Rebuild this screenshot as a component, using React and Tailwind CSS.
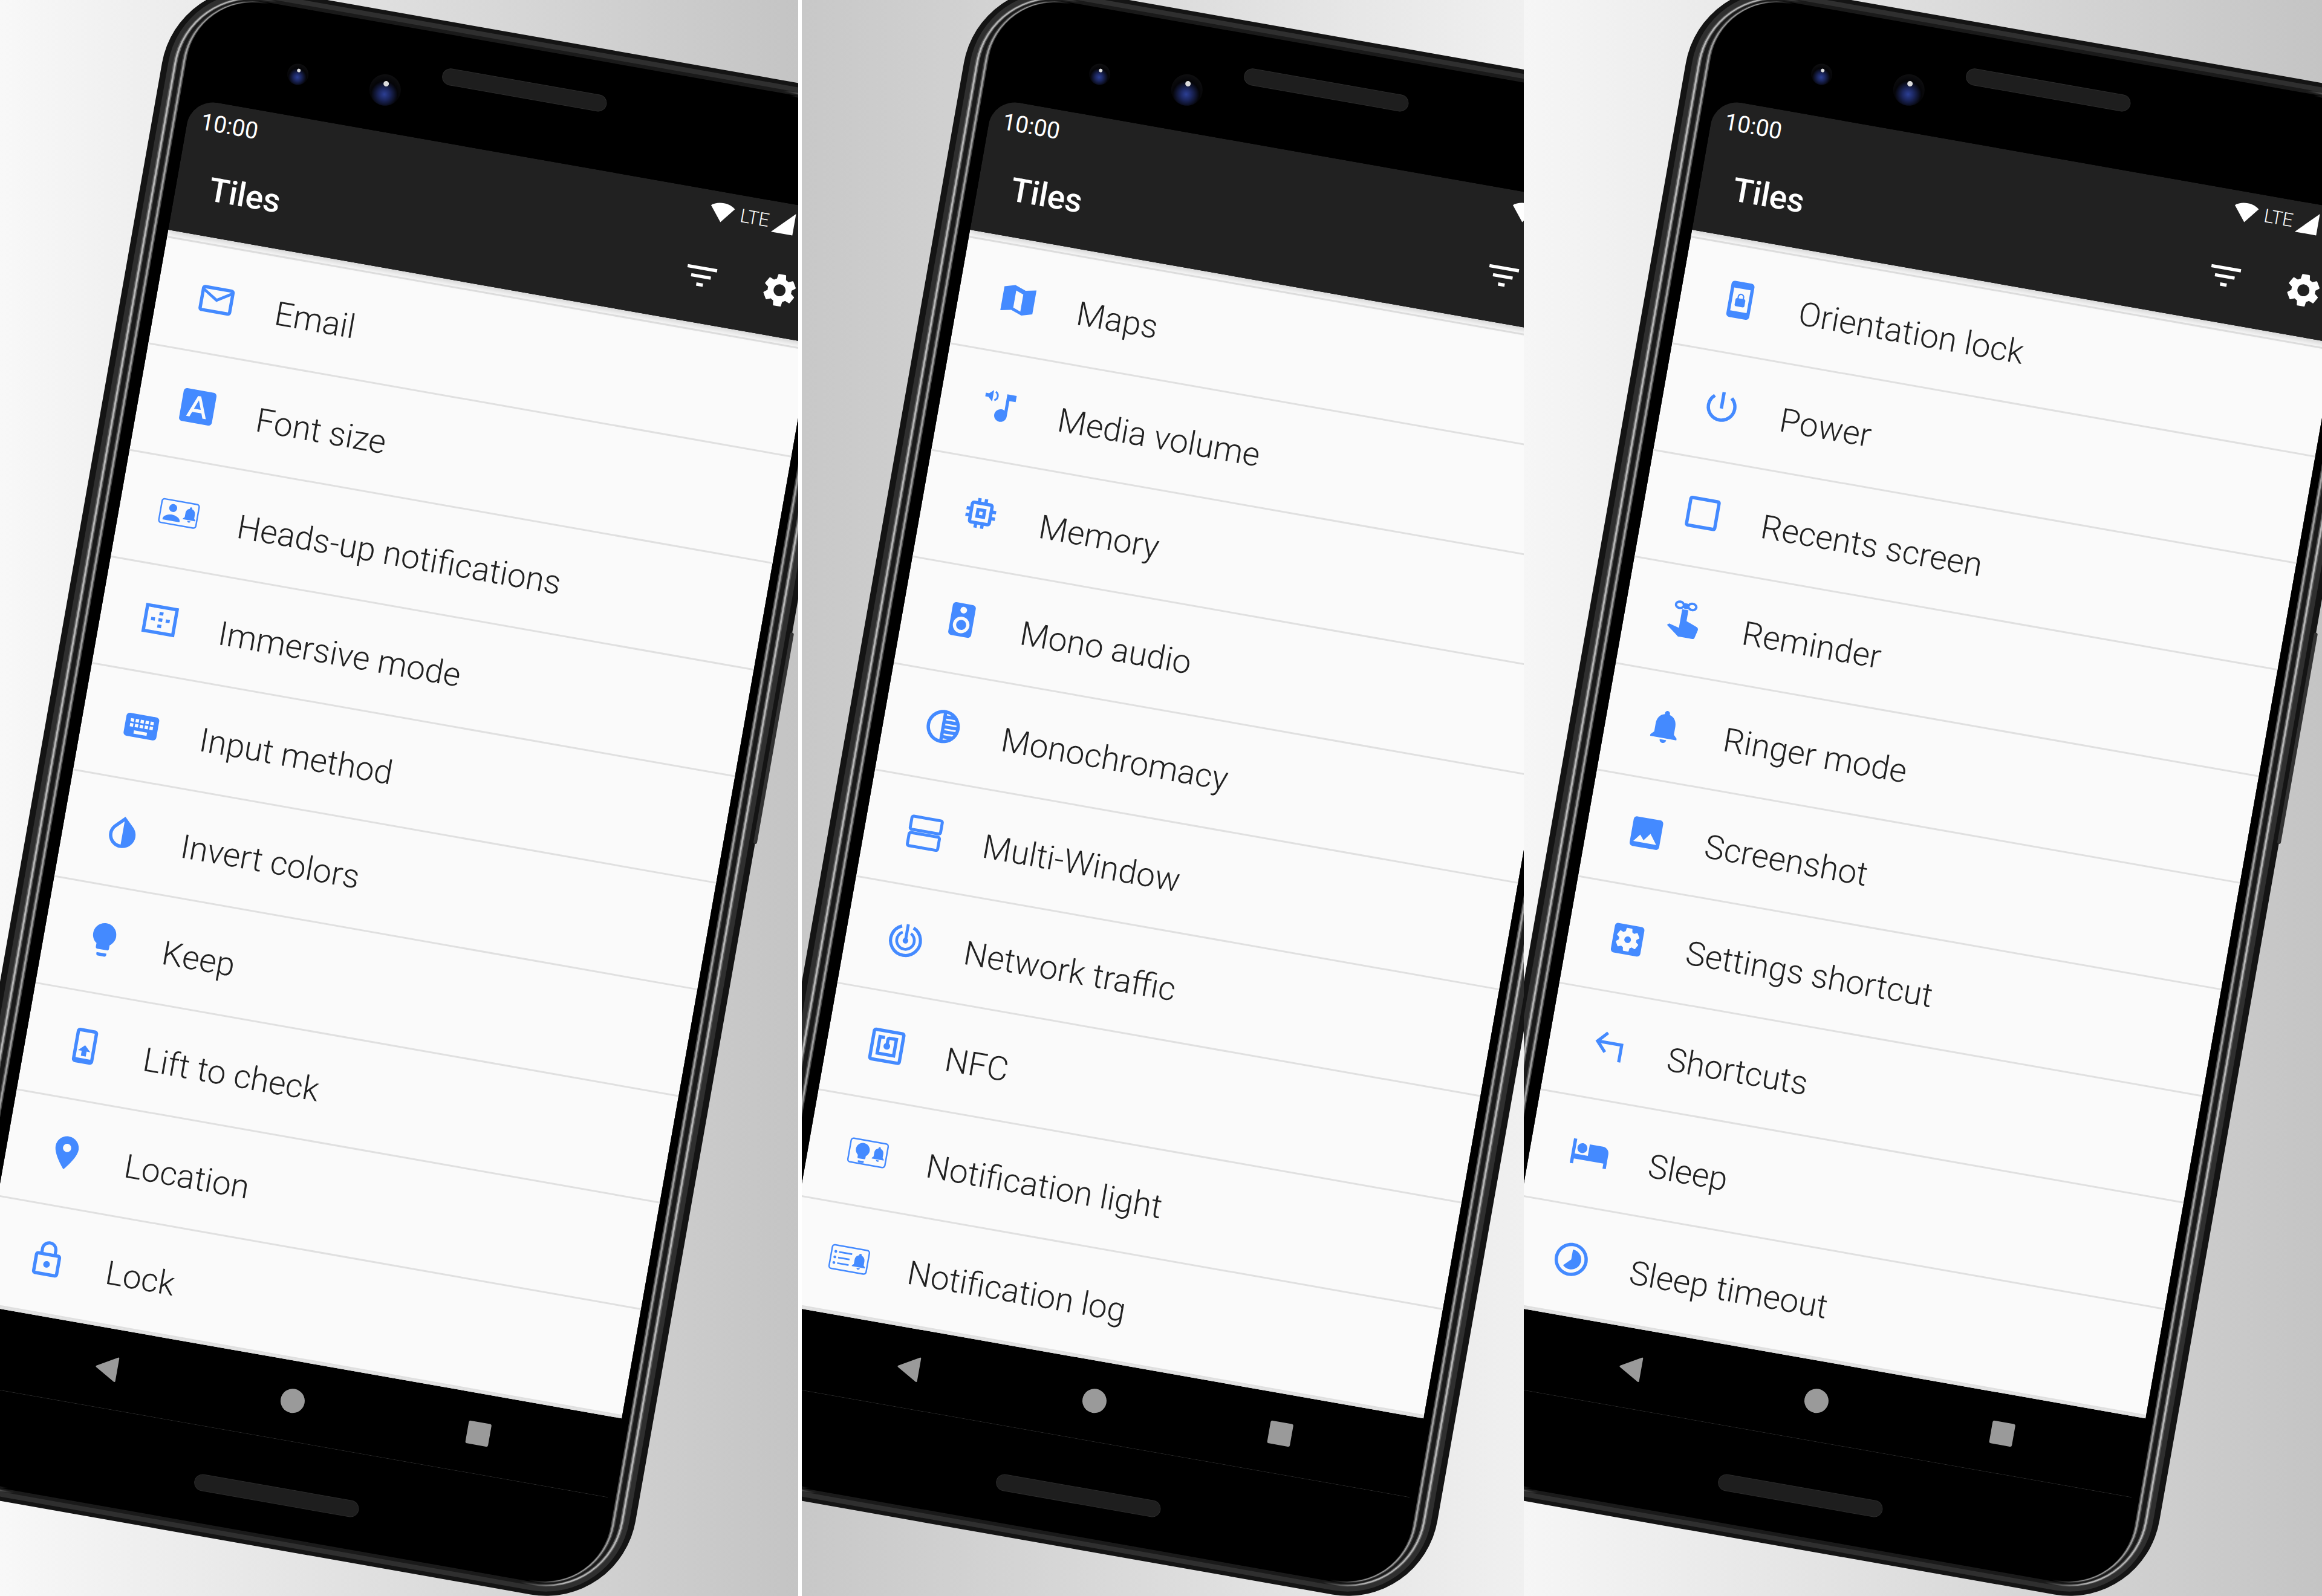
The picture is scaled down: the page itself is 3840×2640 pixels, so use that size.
import {
  MdMailOutline, MdFontDownload, MdKeyboard, MdInvertColors, MdLightbulb, MdLocationOn, MdLockOutline,
  MdMemory, MdSpeaker, MdTonality, MdNfc, MdScreenLockPortrait, MdPowerSettingsNew, MdNotifications,
  MdImage, MdSettingsApplications, MdHotel, MdTimelapse, MdFilterList, MdSettings,
} from "react-icons/md";

const BELL = "M12 22c1.1 0 2-.9 2-2h-4c0 1.1.89 2 2 2zm6-6v-5c0-3.07-1.64-5.64-4.5-6.32V4c0-.83-.67-1.5-1.5-1.5s-1.5.67-1.5 1.5v.68C7.63 5.36 6 7.92 6 11v5l-2 2v1h16v-1l-2-2z";
const BULB = "M9 21c0 .55.45 1 1 1h4c.55 0 1-.45 1-1v-1H9v1zm3-19C8.14 2 5 5.14 5 9c0 2.38 1.19 4.47 3 5.74V17c0 .55.45 1 1 1h6c.55 0 1-.45 1-1v-2.26c1.81-1.27 3-3.36 3-5.74 0-3.86-3.14-7-7-7z";

const Svg = ({ children, className = "size-[66px]" }) => (
  <svg viewBox="0 0 24 24" fill="currentColor" className={className}>{children}</svg>
);

const Card = ({ children }) => (
  <Svg>
    <rect x=".7" y="4.8" width="22.6" height="14.4" rx="1.5" fill="none" stroke="currentColor" strokeWidth=".9" />
    {children}
  </Svg>
);

const HeadsUp = () => (
  <Card>
    <circle cx="8" cy="9.4" r="2.4" />
    <path d="M2.8 16.6c0-2.1 3.5-3.2 5.2-3.2s5.2 1.1 5.2 3.2v.6H2.8z" />
    <path d={BELL} transform="translate(12.9 5.9) scale(.48)" />
  </Card>
);

const NotifLight = () => (
  <Card>
    <path d={BULB} transform="translate(1.4 5.4) scale(.6)" />
    <path d={BELL} transform="translate(12.9 6.2) scale(.46)" />
  </Card>
);

const NotifLog = () => (
  <Card>
    <circle cx="3.2" cy="8.6" r=".85" />
    <circle cx="3.2" cy="12" r=".85" />
    <circle cx="3.2" cy="15.4" r=".85" />
    <path d="M5.2 8.1h8v1h-8zM5.2 11.5h7v1h-7zM5.2 14.9h7v1h-7z" />
    <path d={BELL} transform="translate(12.2 6.2) scale(.5)" />
  </Card>
);

const Immersive = () => (
  <Svg>
    <path fillRule="evenodd" d="M2 3.2h20v17.6H2zM4 5.2v13.6h16V5.2z" />
    <path d="M10.9 7.2h2.4v2h-2.4zM6.4 11h2.4v2H6.4zM10.9 11h2.4v2h-2.4zM15.4 11h2.4v2h-2.4zM10.9 14.8h2.4v2h-2.4z" />
  </Svg>
);

const LiftToCheck = () => (
  <Svg>
    <path fillRule="evenodd" d="M7.5 1.5h9c1 0 2 .9 2 2v17c0 1.1-1 2-2 2h-9c-1 0-2-.9-2-2v-17c0-1.1 1-2 2-2zM7.5 3.6v15.8h9V3.6z" />
    <path d="M12 11.4l-3.8 3.6h2.3v3h3v-3h2.3z" />
  </Svg>
);

const Maps = () => (
  <Svg>
    <path fillRule="evenodd" d="M2.3 5.1L8.7 3.3l6.6 2.3 6.4-1.3v14.6l-6.4 1.8-6.6-2.3-6.4 1.3zM9.7 6.4v10.4l4.6 1.7V8.1z" />
  </Svg>
);

const MediaVolume = () => (
  <Svg>
    <path d="M12 3v10.55c-.59-.34-1.27-.55-2-.55-2.21 0-4 1.79-4 4s1.79 4 4 4 4-1.79 4-4V7h4V3h-6z" transform="translate(3.9 .9) scale(.95)" />
    <path d="M2.4 5h2l2.6-2.4v7L4.4 7.2h-2z" />
    <path d="M8.2 3.4a2.9 2.9 0 0 1 0 5.2" fill="none" stroke="currentColor" strokeWidth="1.1" />
  </Svg>
);

const MultiWindow = () => (
  <Svg>
    <rect x="3" y="3" width="18.5" height="8" rx="1" fill="none" stroke="currentColor" strokeWidth="1.8" />
    <rect x="3" y="13" width="18.5" height="8" rx="1" fill="none" stroke="currentColor" strokeWidth="1.8" />
  </Svg>
);

const NetworkTraffic = () => (
  <Svg>
    <path d="M8.5 4.2a9 9 0 1 0 7 0" fill="none" stroke="currentColor" strokeWidth="1.9" />
    <path d="M9.5 7.8a5.3 5.3 0 1 0 5 0" fill="none" stroke="currentColor" strokeWidth="1.7" />
    <rect x="11.1" y="2.6" width="1.8" height="10" />
    <circle cx="12" cy="12.6" r="1.7" />
  </Svg>
);

const Recents = () => (
  <Svg>
    <rect x="3.4" y="3.6" width="17.2" height="16.8" rx=".8" fill="none" stroke="currentColor" strokeWidth="2" />
  </Svg>
);

const Reminder = () => (
  <Svg>
    <ellipse cx="8" cy="3.4" rx="2.4" ry="1.9" fill="none" stroke="currentColor" strokeWidth="1.4" />
    <ellipse cx="15.6" cy="3.4" rx="2.4" ry="1.9" fill="none" stroke="currentColor" strokeWidth="1.4" />
    <rect x="10.2" y="1.9" width="3.4" height="3.4" rx="1.2" />
    <path d="M9.8 5.8h3.8v6.6l6.6 2.5c.9.4 1.2 1.1 1 1.9l-1.1 4.6c-.2.7-.7 1-1.3 1h-8.2c-.5 0-.9-.2-1.2-.6L2.4 16.6l1.2-1 6.2 1.6z" />
  </Svg>
);

const Shortcuts = () => (
  <Svg>
    <path d="M19.5 20.5V10H4.8M10.2 4.1L4.8 10l5.4 5.9" fill="none" stroke="currentColor" strokeWidth="1.9" />
  </Svg>
);

const COLUMNS = [
  [
    [MdMailOutline, "Email"],
    [MdFontDownload, "Font size"],
    [HeadsUp, "Heads-up notifications"],
    [Immersive, "Immersive mode"],
    [MdKeyboard, "Input method"],
    [MdInvertColors, "Invert colors"],
    [MdLightbulb, "Keep"],
    [LiftToCheck, "Lift to check"],
    [MdLocationOn, "Location"],
    [MdLockOutline, "Lock"],
  ],
  [
    [Maps, "Maps"],
    [MediaVolume, "Media volume"],
    [MdMemory, "Memory"],
    [MdSpeaker, "Mono audio"],
    [MdTonality, "Monochromacy"],
    [MultiWindow, "Multi-Window"],
    [NetworkTraffic, "Network traffic"],
    [MdNfc, "NFC"],
    [NotifLight, "Notification light"],
    [NotifLog, "Notification log"],
  ],
  [
    [MdScreenLockPortrait, "Orientation lock"],
    [MdPowerSettingsNew, "Power"],
    [Recents, "Recents screen"],
    [Reminder, "Reminder"],
    [MdNotifications, "Ringer mode"],
    [MdImage, "Screenshot"],
    [MdSettingsApplications, "Settings shortcut"],
    [Shortcuts, "Shortcuts"],
    [MdHotel, "Sleep"],
    [MdTimelapse, "Sleep timeout"],
  ],
];

const Camera = ({ className, dot }) => (
  <div className={`relative shrink-0 rounded-full bg-[radial-gradient(circle_at_50%_64%,#2c3f94_0%,#1c2760_22%,#050508_52%,#161616_100%)] ${className}`}>
    <div className={`absolute left-1/2 top-[22%] -translate-x-1/2 rounded-full bg-[#dcdcdc] ${dot}`} />
  </div>
);

const Speaker = ({ className = "" }) => (
  <div className={`h-[28px] w-[276px] shrink-0 rounded-full border border-[#2c2c2c] bg-[#1e1e1e] ${className}`} />
);

const Row = ({ Icon, label }) => (
  <div className="flex h-[179px] shrink-0 items-center border-b-[3px] border-[#e0e0e0] pl-[66px]">
    <div className="flex size-[66px] shrink-0 items-center justify-center text-[#448aff]">
      <Icon className="size-[66px]" />
    </div>
    <span className="ml-[66px] mt-[8px] whitespace-nowrap text-[55px] font-light leading-none text-[#212121]">{label}</span>
  </div>
);

const Screen = ({ rows }) => (
  <div className="ml-[19px] flex h-[2160px] w-[1080px] shrink-0 flex-col overflow-hidden rounded-t-[44px] border-b border-[#2e2e2e] bg-black">
    <div className="relative z-10 shrink-0 bg-[#212121] text-white shadow-[0_4px_12px_rgba(0,0,0,0.18)]">
      <div className="flex h-[66px] items-center pl-[22px] pr-[61px]">
        <span className="pt-[4px] text-[38.5px] leading-none">10:00</span>
        <div className="ml-auto flex items-center gap-[7px]">
          <svg viewBox="0 0 44 36" fill="currentColor" className="h-[36px] w-[44px]">
            <path d="M2 10C12 1 32 1 42 10L22 35z" />
          </svg>
          <span className="-mr-[2px] ml-[2px] text-[31px] font-light leading-none">LTE</span>
          <svg viewBox="0 0 38 38" fill="currentColor" className="size-[38px]">
            <path d="M37 1v36H1z" />
          </svg>
        </div>
      </div>
      <div className="flex h-[155px] items-center pl-[55px] pr-[34px]">
        <span className="flex-1 text-[55px] font-medium leading-none">Tiles</span>
        <MdFilterList className="size-[66px]" />
        <MdSettings className="ml-[66px] size-[66px]" />
      </div>
    </div>
    <div className="flex h-[1806px] shrink-0 flex-col bg-[#fafafa] pt-[10px]">
      <div className="h-[3px] shrink-0 bg-[#e0e0e0]" />
      {rows.map(([Icon, label]) => (
        <Row key={label} Icon={Icon} label={label} />
      ))}
      <div className="mt-auto h-[3px] shrink-0 bg-[#e0e0e0]" />
    </div>
    <div className="flex h-[132px] shrink-0 items-center justify-between pl-[206px] pr-[210px]">
      <svg viewBox="0 0 40 44" fill="#9a9a9a" stroke="#9a9a9a" strokeWidth="3" strokeLinejoin="round" className="h-[44px] w-[40px]">
        <path d="M37 3v38L4 22z" />
      </svg>
      <div className="size-[40px] rounded-full bg-[#9a9a9a]" />
      <div className="size-[38px] rounded-[3px] bg-[#9a9a9a]" />
    </div>
  </div>
);

// the chrome band: stripes follow the corner, and die out along the top and bottom edges
const Ring = ({ className, children }) => <div className={`h-full ${className}`}>{children}</div>;

const Phone = ({ rows }) => (
  <div className="flex origin-top-left rotate-[10deg] items-start pl-[282px]">
    <div className="relative -mt-[94px] h-[2539px] w-[1190px] shrink-0 rounded-[150px] bg-[#141414] px-[10px] py-[7px]">
      <div className="absolute -right-[3px] top-[897px] h-[355px] w-[6px] rounded-[3px] bg-[#333]" />
      <Ring className="rounded-[140px] bg-[#2f2f2f] px-[8px] py-[8px]">
        <Ring className="rounded-[132px] bg-[linear-gradient(90deg,#5a5a5a_0%,#5a5a5a_7%,#1a1a1a_13%,#1a1a1a_87%,#5a5a5a_93%,#5a5a5a_100%)] px-[2px] py-[1px]">
          <Ring className="rounded-[130px] bg-[linear-gradient(90deg,#b4b4b4_0%,#b4b4b4_7%,#1a1a1a_13%,#1a1a1a_87%,#b4b4b4_93%,#b4b4b4_100%)] px-[3px] py-[2px]">
            <Ring className="rounded-[127px] bg-[linear-gradient(90deg,#5a5a5a_0%,#5a5a5a_7%,#1a1a1a_13%,#1a1a1a_87%,#5a5a5a_93%,#5a5a5a_100%)] px-[2px] py-[1px]">
              <Ring className="rounded-[125px] bg-[#1a1a1a] px-[7px] py-[2px]">
                <Ring className="rounded-[118px] bg-[linear-gradient(90deg,#484848_0%,#484848_6%,#000_11%,#000_89%,#484848_94%,#484848_100%)] px-[2px] py-[1px]">
                  <Ring className="rounded-[116px] bg-[linear-gradient(90deg,#9c9c9c_0%,#9c9c9c_6%,#000_11%,#000_89%,#9c9c9c_94%,#9c9c9c_100%)] px-[3px] py-[1px]">
                    <Ring className="rounded-[113px] bg-[linear-gradient(90deg,#484848_0%,#484848_6%,#000_11%,#000_89%,#484848_94%,#484848_100%)] px-[2px] py-[1px]">
                      <div className="h-full overflow-hidden rounded-[110px] bg-black">
                        <div className="flex h-[175px] items-start">
                          <Camera className="ml-[168px] mt-[88px] size-[35px]" dot="size-[6px]" />
                          <Camera className="ml-[103px] mt-[80px] size-[52px]" dot="size-[9px]" />
                          <Speaker className="ml-[63px] mt-[52px]" />
                        </div>
                        <Screen rows={rows} />
                        <div className="flex justify-start pl-[421px] pt-[78px]">
                          <Speaker />
                        </div>
                      </div>
                    </Ring>
                  </Ring>
                </Ring>
              </Ring>
            </Ring>
          </Ring>
        </Ring>
      </Ring>
    </div>
  </div>
);

export default function App() {
  return (
    <div className="flex h-[2640px] w-[3840px] overflow-hidden bg-white font-[Roboto,sans-serif]">
      <div className="h-full w-[1320px] shrink-0 overflow-hidden bg-[linear-gradient(90deg,#f8f8f8,#c4c4c4)]">
        <Phone rows={COLUMNS[0]} />
      </div>
      <div className="ml-[6px] h-full w-[1194px] shrink-0 overflow-hidden bg-[linear-gradient(90deg,#c8c8c8,#f0f0f0)]">
        <Phone rows={COLUMNS[1]} />
      </div>
      <div className="h-full w-[1320px] shrink-0 overflow-hidden bg-[linear-gradient(90deg,#f6f6f6,#c4c4c4)]">
        <Phone rows={COLUMNS[2]} />
      </div>
    </div>
  );
}
